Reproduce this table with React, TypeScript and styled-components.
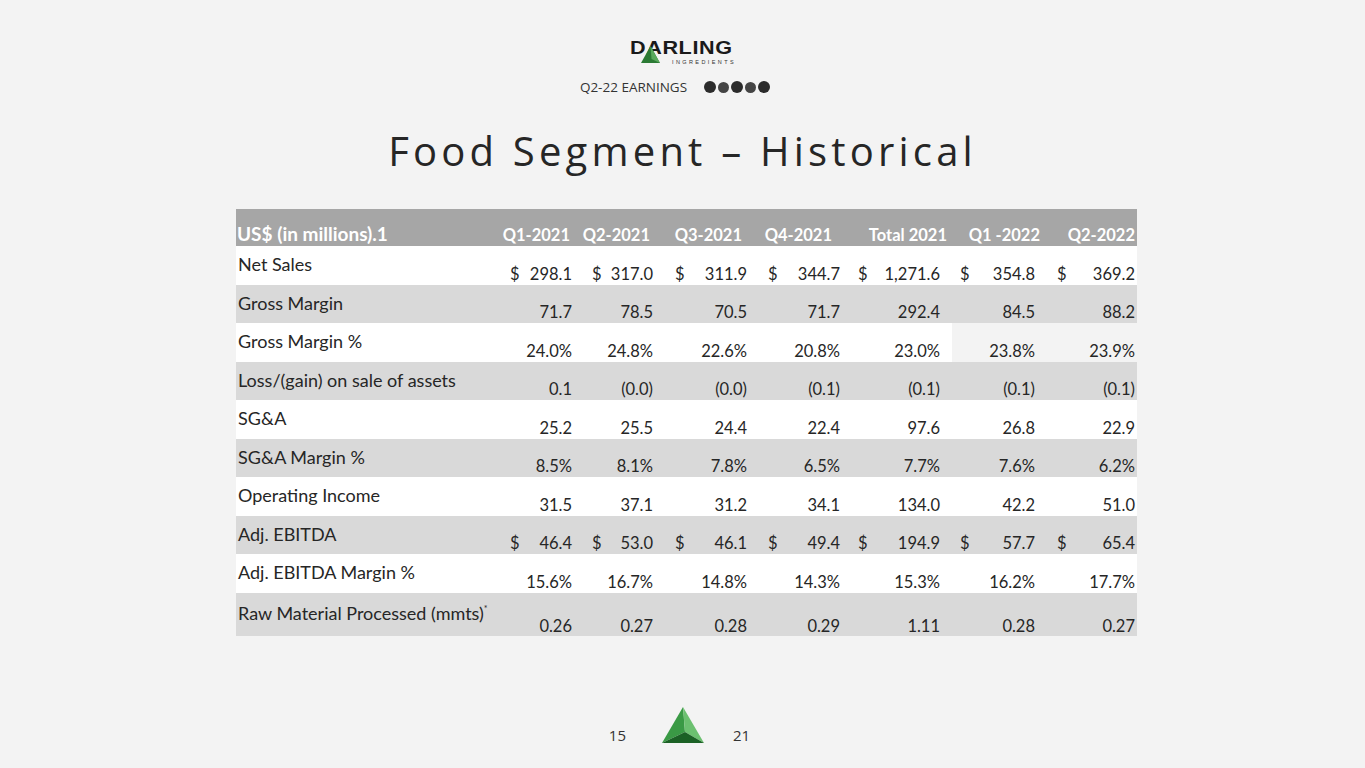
import React from 'react'
import styled, { createGlobalStyle } from 'styled-components'

const GlobalStyle = createGlobalStyle`
  html, body {
    margin: 0;
    padding: 0;
    background: #f3f3f3;
  }
  body {
    font-family: Lato, 'Liberation Sans', sans-serif;
    color: #262626;
  }
`

type Cell = { dollar?: boolean; value: string; plain?: boolean }

interface RowData {
  label: string
  sup?: string
  cells: Cell[]
  shaded: boolean
  tall?: boolean
}

const HEADERS = ['Q1-2021', 'Q2-2021', 'Q3-2021', 'Q4-2021', 'Total 2021', 'Q1 -2022', 'Q2-2022']
// right padding of each column's heading, values and left padding of the "$"
const HEADER_PAD = [15, 18, 18, 20, 5, 5, 2]
const VALUE_PAD = [13, 15, 13, 12, 12, 10, 2]
const DOLLAR_PAD = [5, 7, 7, 8, 6, 8, 12]

const d = (v: string): Cell => ({ dollar: true, value: v })
const p = (v: string): Cell => ({ value: v })

const ROWS: RowData[] = [
  { label: 'Net Sales', shaded: false, cells: ['298.1', '317.0', '311.9', '344.7', '1,271.6', '354.8', '369.2'].map(d) },
  { label: 'Gross Margin', shaded: true, cells: ['71.7', '78.5', '70.5', '71.7', '292.4', '84.5', '88.2'].map(p) },
  {
    label: 'Gross Margin %',
    shaded: false,
    cells: [p('24.0%'), p('24.8%'), p('22.6%'), p('20.8%'), p('23.0%'), { value: '23.8%', plain: true }, { value: '23.9%', plain: true }],
  },
  { label: 'Loss/(gain) on sale of assets', shaded: true, cells: ['0.1', '(0.0)', '(0.0)', '(0.1)', '(0.1)', '(0.1)', '(0.1)'].map(p) },
  { label: 'SG&A', shaded: false, cells: ['25.2', '25.5', '24.4', '22.4', '97.6', '26.8', '22.9'].map(p) },
  { label: 'SG&A Margin %', shaded: true, cells: ['8.5%', '8.1%', '7.8%', '6.5%', '7.7%', '7.6%', '6.2%'].map(p) },
  { label: 'Operating Income', shaded: false, cells: ['31.5', '37.1', '31.2', '34.1', '134.0', '42.2', '51.0'].map(p) },
  { label: 'Adj. EBITDA', shaded: true, cells: ['46.4', '53.0', '46.1', '49.4', '194.9', '57.7', '65.4'].map(d) },
  { label: 'Adj. EBITDA Margin %', shaded: false, cells: ['15.6%', '16.7%', '14.8%', '14.3%', '15.3%', '16.2%', '17.7%'].map(p) },
  {
    label: 'Raw Material Processed (mmts)',
    sup: '*',
    shaded: true,
    tall: true,
    cells: ['0.26', '0.27', '0.28', '0.29', '1.11', '0.28', '0.27'].map(p),
  },
]

const App: React.FC = () => (
  <>
    <GlobalStyle />
    <Slide>
      <Logo>
        <LogoWord>DARLING</LogoWord>
        <LogoMark viewBox='0 0 19 17'>
          <polygon points='9.5,0 0,17 19,17' fill='#2b7a34' />
          <polygon points='9.5,0 19,17 10.5,13' fill='#5aa95c' />
        </LogoMark>
        <LogoSub>INGREDIENTS</LogoSub>
      </Logo>

      <Earnings>
        <span>Q2-22 EARNINGS</span>
        <Dots>
          <Dot />
          <Dot small />
          <Dot />
          <Dot small />
          <Dot />
        </Dots>
      </Earnings>

      <Title>Food Segment – Historical</Title>

      <Table>
        <HeaderCell first>US$ (in millions).1</HeaderCell>
        {HEADERS.map((h, i) => (
          <HeaderCell key={h} style={{ paddingRight: HEADER_PAD[i] }}>
            {h}
          </HeaderCell>
        ))}

        {ROWS.map(row => (
          <React.Fragment key={row.label}>
            <LabelCell shaded={row.shaded} tall={row.tall}>
              {row.label}
              {row.sup && <sup>{row.sup}</sup>}
            </LabelCell>
            {row.cells.map((c, i) => (
              <ValueCell
                key={i}
                shaded={row.shaded && !c.plain}
                plain={c.plain}
                tall={row.tall}
                style={{ paddingRight: VALUE_PAD[i], paddingLeft: DOLLAR_PAD[i] }}>
                <span>{c.dollar ? '$' : ''}</span>
                <span>{c.value}</span>
              </ValueCell>
            ))}
          </React.Fragment>
        ))}
      </Table>

      <Footer>
        <PageNum>15</PageNum>
        <Pyramid viewBox='0 0 42 36'>
          <polygon points='21,0 0,36 23,25' fill='#3a9a45' />
          <polygon points='21,0 23,25 42,36' fill='#6cc070' />
          <polygon points='0,36 23,25 42,36' fill='#1b6125' />
        </Pyramid>
        <PageNum right>21</PageNum>
      </Footer>
    </Slide>
  </>
)

const Slide = styled.div`
  width: 1365px;
  height: 768px;
  display: flex;
  flex-direction: column;
  align-items: center;
  box-sizing: border-box;
  padding-top: 36px;
`

const Logo = styled.div`
  position: relative;
  width: 104px;
  height: 30px;
  display: flex;
  flex-direction: column;
  align-items: flex-end;
  margin-left: -1px;
`

const LogoWord = styled.div`
  align-self: flex-start;
  margin-top: 3px;
  font-family: 'Liberation Sans', Arial, sans-serif;
  font-weight: 700;
  font-size: 18px;
  line-height: 18px;
  letter-spacing: 0.5px;
  color: #1a1a1a;
  transform: scaleX(1.2);
  transform-origin: left center;
`

const LogoMark = styled.svg`
  position: absolute;
  left: 11px;
  top: 10px;
  width: 19px;
  height: 17px;
`

const LogoSub = styled.div`
  font-family: 'Liberation Sans', Arial, sans-serif;
  font-size: 5.5px;
  line-height: 6px;
  letter-spacing: 2.4px;
  color: #333;
  margin-top: 2px;
  margin-right: -2px;
`

const Earnings = styled.div`
  display: flex;
  align-items: center;
  gap: 17px;
  margin-top: 12px;
  margin-left: -15px;
  font-family: 'Open Sans', 'Liberation Sans', sans-serif;
  font-size: 13.5px;
  color: #333;
`

const Dots = styled.div`
  display: flex;
  align-items: center;
  gap: 2px;
`

const Dot = styled.i<{ small?: boolean }>`
  display: block;
  width: ${p => (p.small ? 11 : 12)}px;
  height: ${p => (p.small ? 11 : 12)}px;
  border-radius: 50%;
  background: ${p => (p.small ? '#444' : '#2b2b2b')};
`

const Title = styled.h1`
  margin: 28px 0 0;
  font-family: 'Open Sans', 'Liberation Sans', sans-serif;
  font-weight: 400;
  font-size: 40px;
  line-height: 54px;
  letter-spacing: 4.2px;
  color: #262626;
`

const Table = styled.div`
  margin-top: 31px;
  margin-left: 8px;
  display: grid;
  grid-template-columns: 269px 80px 83px 92px 92px 100px 93px 92px;
  grid-template-rows: 37px repeat(9, 38.5px) 43px;
  width: 901px;
`

const HeaderCell = styled.div<{ first?: boolean }>`
  background: #a6a6a6;
  color: #fff;
  font-weight: 700;
  font-size: ${p => (p.first ? '19px' : '16.5px')};
  display: flex;
  align-items: flex-end;
  justify-content: ${p => (p.first ? 'flex-start' : 'flex-end')};
  padding-bottom: 1px;
  padding-left: ${p => (p.first ? '1px' : '0')};
  white-space: nowrap;
`

const LabelCell = styled.div<{ shaded: boolean; tall?: boolean }>`
  background: ${p => (p.shaded ? '#d9d9d9' : '#ffffff')};
  font-size: 18px;
  padding: ${p => (p.tall ? '10px' : '8px')} 0 0 2px;
  line-height: 20px;
  white-space: nowrap;

  sup {
    font-size: 9px;
    vertical-align: top;
    line-height: 12px;
  }
`

const ValueCell = styled.div<{ shaded: boolean; plain?: boolean; tall?: boolean }>`
  background: ${p => (p.plain ? 'transparent' : p.shaded ? '#d9d9d9' : '#ffffff')};
  font-size: 16.5px;
  display: flex;
  justify-content: space-between;
  align-items: flex-end;
  padding-bottom: ${p => (p.tall ? '1px' : '2px')};
  white-space: nowrap;
  line-height: 18px;
`

const Footer = styled.div`
  margin-top: 71px;
  margin-left: -6px;
  display: flex;
  align-items: flex-end;
  gap: 36px;
`

const PageNum = styled.span<{ right?: boolean }>`
  font-family: 'Open Sans', 'Liberation Sans', sans-serif;
  font-size: 15px;
  color: #333;
  line-height: 20px;
  margin-bottom: -2px;
  margin-left: ${p => (p.right ? '-7px' : '0')};
`

const Pyramid = styled.svg`
  width: 42px;
  height: 36px;
`

export default App
